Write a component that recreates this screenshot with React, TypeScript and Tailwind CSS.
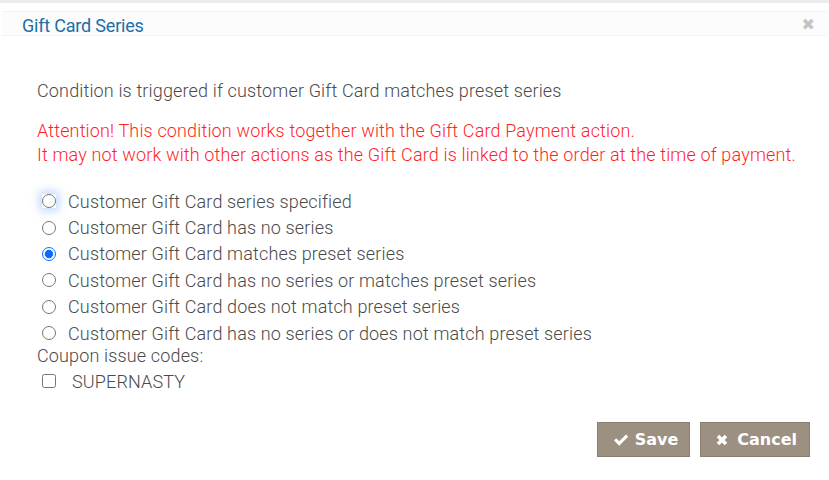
import { useState } from 'react';

const options = [
  'Customer Gift Card series specified',
  'Customer Gift Card has no series',
  'Customer Gift Card matches preset series',
  'Customer Gift Card has no series or matches preset series',
  'Customer Gift Card does not match preset series',
  'Customer Gift Card has no series or does not match preset series',
];

export default function App() {
  const [selected, setSelected] = useState(2);
  const [checked, setChecked] = useState(false);

  return (
    <div className="w-[829px] h-[480px] bg-white font-['Roboto',sans-serif] text-[#555] overflow-hidden">
      <div className="h-[3px] bg-[#ececec]" />
      {/* Header */}
      <div className="mt-[8px] mx-[2px] h-[25px] flex items-center justify-between bg-[#fcfcfc] border-y border-[#f3f3f3] pl-[20px] pr-[12px]">
        <h2 className="pt-[4px] text-[18px] leading-[20px] text-[#1d6ea8] tracking-[-0.2px]">Gift Card Series</h2>
        <button className="pt-[3px] text-[#c4c4c4] text-[16px] font-bold leading-none font-['DejaVu_Sans',sans-serif]">✖</button>
      </div>

      {/* Body */}
      <div className="pl-[37px] pr-[20px] pt-[43px] text-[18px] font-light tracking-[0.15px] whitespace-nowrap">
        <p className="leading-[24px] text-[#4a4a4a]">Condition is triggered if customer Gift Card matches preset series</p>
        <p className="mt-[16px] leading-[24px] text-[#ff1f1f]">
          Attention! This condition works together with the Gift Card Payment action.
          <br />
          It may not work with other actions as the Gift Card is linked to the order at the time of payment.
        </p>

        <div className="mt-[21px] flex flex-col">
          {options.map((label, i) => (
            <label key={label} className="flex items-center h-[26.4px] text-[#4a4a4a] cursor-pointer">
              <input
                type="radio"
                name="series"
                checked={selected === i}
                onChange={() => setSelected(i)}
                className={`ml-[5px] mr-[12px] w-[14px] h-[14px] accent-[#0a6cff] ${i === 0 ? 'shadow-[0_0_8px_3px_rgba(120,170,255,0.45)]' : ''}`}
              />
              {label}
            </label>
          ))}
        </div>

        <div className="leading-[20px] text-[#4a4a4a]">Coupon issue codes:</div>
        <label className="mt-[4px] flex items-center text-[#4a4a4a] h-[22px]">
          <input
            type="checkbox"
            checked={checked}
            onChange={() => setChecked(!checked)}
            className="ml-[5px] mr-[16px] w-[14px] h-[14px]"
          />
          SUPERNASTY
        </label>
      </div>

      {/* Footer */}
      <div className="flex justify-end gap-[10px] pr-[19px] mt-[30px]">
        <button className="h-[35px] pl-[15px] pr-[11px] flex items-center gap-[6px] bg-[#9c9083] border border-[#8b7e71] text-white text-[16px] font-bold font-['DejaVu_Sans',sans-serif]">
          <svg width="16" height="14" viewBox="0 0 16 14" fill="white"><path d="M1 7.5l2.2-2.2 3 3L13 1.5l2.2 2.2-9 9z" /></svg>
          Save
        </button>
        <button className="h-[35px] pl-[15px] pr-[12px] flex items-center gap-[9px] bg-[#9c9083] border border-[#8b7e71] text-white text-[16px] font-bold font-['DejaVu_Sans',sans-serif]">
          <svg width="12" height="12" viewBox="0 0 12 12" fill="none" stroke="white" strokeWidth="3.6"><path d="M2 2l8 8M10 2l-8 8" /></svg>
          Cancel
        </button>
      </div>
    </div>
  );
}
